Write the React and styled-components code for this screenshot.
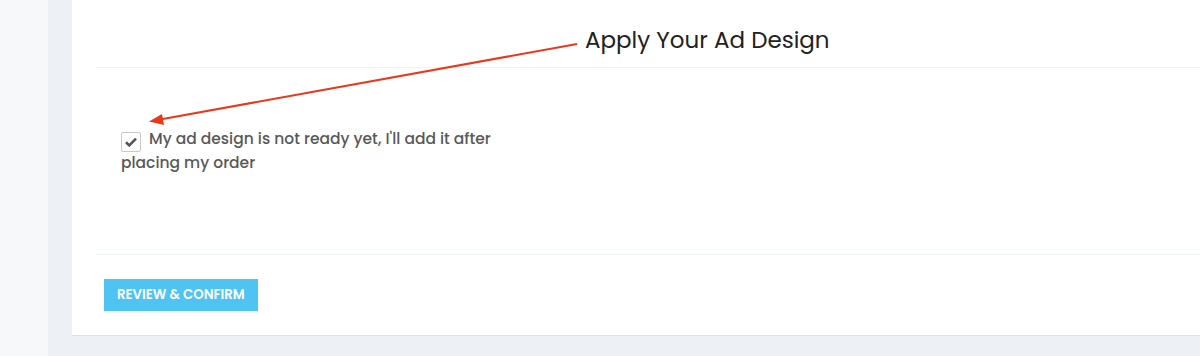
import React from 'react';
import styled, { createGlobalStyle } from 'styled-components';

const GlobalStyle = createGlobalStyle`
  html, body {
    margin: 0;
    padding: 0;
    background: #edf0f4;
    font-family: "Poppins", "Inter", "Noto Sans", sans-serif;
  }
`;

const Page = styled.div`
  position: relative;
  display: flex;
  width: 1200px;
  height: 356px;
  overflow: hidden;
`;

const LeftStrip = styled.div`
  width: 48px;
  flex-shrink: 0;
  background: #f7f8f9;
`;

const Main = styled.div`
  flex: 1;
  background: #edf0f4;
  padding-left: 24px;
`;

const Card = styled.div`
  height: 335px;
  background: #fff;
  box-shadow: 0 1px 0 #dde1e6;
  padding: 0 0 0 24px;
  display: flex;
  flex-direction: column;
`;

const Header = styled.div`
  height: 67px;
  flex-shrink: 0;
`;

const Section = styled.div`
  border-top: 1px solid #f1f2f4;
  height: 187px;
  padding: 60px 0 0 25px;
  box-sizing: border-box;
`;

const Footer = styled.div`
  border-top: 1px solid #f1f2f4;
  padding: 24px 0 0 8px;
`;

const CheckLabel = styled.label`
  display: block;
  width: 390px;
  font-size: 15.5px;
  font-weight: 500;
  line-height: 21px;
  color: #595959;
`;

const Box = styled.span`
  display: inline-flex;
  align-items: center;
  justify-content: center;
  width: 18px;
  height: 18px;
  border: 1px solid #c9c9c9;
  border-radius: 2px;
  vertical-align: -3px;
  margin-right: 8px;
  background: #fff;
`;

const Button = styled.button`
  height: 32px;
  padding: 0 13px;
  border: none;
  background: #4fc3f1;
  color: #fff;
  font-family: inherit;
  font-size: 13.3px;
  font-weight: 600;
  text-transform: uppercase;
  letter-spacing: 0;
`;

const Annotation = styled.div`
  position: absolute;
  inset: 0;
  pointer-events: none;
`;

const Label = styled.div`
  position: absolute;
  left: 585px;
  top: 24px;
  font-size: 23px;
  font-weight: 400;
  color: #222;
  line-height: 32px;
`;

export default function App() {
  return (
    <>
      <GlobalStyle />
      <Page>
        <LeftStrip />
        <Main>
          <Card>
            <Header />
            <Section>
              <CheckLabel>
                <Box>
                  <svg width="12" height="10" viewBox="0 0 12 10">
                    <path d="M1 5.2 L4.3 8.4 L11 1.6" fill="none" stroke="#555" strokeWidth="2.6" />
                  </svg>
                </Box>
                My ad design is not ready yet, I'll add it after placing my order
              </CheckLabel>
            </Section>
            <Footer>
              <Button>Review &amp; Confirm</Button>
            </Footer>
          </Card>
        </Main>
        <Annotation>
          <svg width="1200" height="356">
            <line x1="577" y1="44" x2="160" y2="119.5" stroke="#e8391d" strokeWidth="2" />
            <polygon points="149,121.5 162,114 164,125" fill="#e8391d" />
          </svg>
          <Label>Apply Your Ad Design</Label>
        </Annotation>
      </Page>
    </>
  );
}
